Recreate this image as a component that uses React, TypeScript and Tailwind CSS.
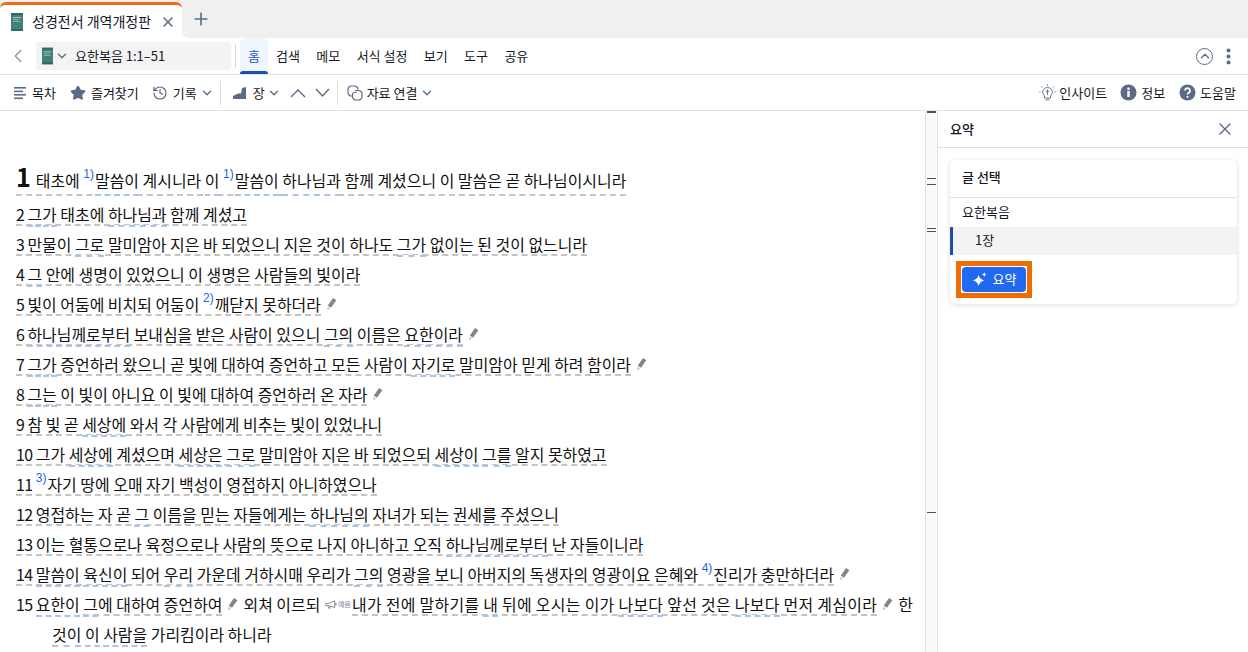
import React from "react";
import { ChevronLeft, ChevronDown, ChevronUp, X, Plus, History, Star } from "lucide-react";

const FONT = { fontFamily: '"Noto Sans CJK KR","Noto Sans",sans-serif' };
const SLATE = "#5b6b85";

function BookIcon({ w = 12, h = 18 }: { w?: number; h?: number }) {
  return (
    <svg width={w} height={h} viewBox="0 0 12 18" className="shrink-0">
      <rect width="12" height="18" fill="#43807a" />
      <rect width="12" height="2" fill="#35665f" />
      <rect y="16" width="12" height="2" fill="#35665f" />
      <rect x="2" y="4" width="8" height="1" fill="#a8c6c1" />
      <rect x="2" y="6" width="6" height="1" fill="#8fb6b0" />
      <rect x="2" y="8" width="7" height="1" fill="#8fb6b0" />
    </svg>
  );
}

function Pen() {
  return (
    <svg width="11" height="15" viewBox="0 0 10 14" className="shrink-0 ml-[5px] mr-[5px] mt-[7px]">
      <path d="M6.5 1 L9.5 3 L4.5 10 L1.5 8 Z" fill="#858585" />
      <path d="M1.5 9 L3.5 10.5 L1 12.5 Z" fill="#bdbdbd" />
    </svg>
  );
}

const S = ({ children }: { children: React.ReactNode }) => (
  <sup className="text-[12px] text-[#2563eb] align-[3px] leading-none mr-[1px]" style={{ fontFamily: '"Liberation Sans",sans-serif' }}>{children}</sup>
);

const U = ({ children, first }: { children: React.ReactNode; first?: boolean }) => (
  <span className={"relative after:absolute after:left-0 after:right-0 after:h-[2px] after:bg-white after:border-b-2 after:border-dashed after:border-[#a9c4e6] " + (first ? "after:bottom-[-4px]" : "after:bottom-[-1px]")}>{children}</span>
);

const D = ({ children, cls }: { children: React.ReactNode; cls?: string }) => (
  <span className={"block h-[26px] leading-[28px] border-b-2 border-dashed border-[#c4c4c4] " + (cls || "")}>{children}</span>
);
const P = ({ children }: { children: React.ReactNode }) => (
  <span className="block h-[26px] leading-[28px]">{children}</span>
);

const Num = ({ children }: { children: React.ReactNode }) => (
  <span className="tracking-[-0.5px]">{children}</span>
);

const Verse = ({ children, pen }: { children: React.ReactNode; pen?: boolean }) => (
  <div className="flex h-[30px] pt-[1px] whitespace-pre">
    <D>{children}</D>
    {pen && <Pen />}
  </div>
);

const Sep = ({ cls }: { cls: string }) => <div className={"w-px h-[24px] bg-[#dcdcdc] shrink-0 " + cls} />;
const Lbl = ({ children, cls }: { children: React.ReactNode; cls?: string }) => (
  <span className={"text-[13px] text-[#111827] whitespace-nowrap " + (cls || "")}>{children}</span>
);
const Chev = ({ cls }: { cls: string }) => <ChevronDown size={14} strokeWidth={2.2} className={"text-[#5b6b85] shrink-0 " + cls} />;

export default function App() {
  return (
    <div style={FONT} className="w-[1248px] h-[652px] overflow-hidden flex flex-col bg-white text-[#111]">
      {/* tab bar */}
      <div className="h-[38px] flex shrink-0 bg-white">
        <div className="bg-[#f0f0f0] pt-[2px] shrink-0">
          <div className="w-[182px] h-[36px] bg-white rounded-t-[6px] border-t-[3px] border-[#ee6c1c] flex items-center pl-[11px]">
            <BookIcon />
            <span className="text-[14px] ml-[9px] text-[#111827] whitespace-nowrap">성경전서 개역개정판</span>
            <X size={16} strokeWidth={2.4} className="text-[#5b6b85] ml-[9px]" />
          </div>
        </div>
        <div className="flex-1 bg-[#f0f0f0] rounded-bl-[7px] flex items-center pl-[9px]">
          <Plus size={20} strokeWidth={1.9} className="text-[#5b6b85]" />
        </div>
      </div>

      {/* nav bar */}
      <div className="h-[37px] shrink-0 flex items-center border-b border-[#e2e2e2] pl-[7px] pr-[10px]">
        <ChevronLeft size={22} strokeWidth={1.5} className="text-[#8b95a5] shrink-0" />
        <div className="ml-[7px] w-[195px] h-[28px] bg-[#f3f3f3] rounded-[4px] flex items-center pl-[6px] shrink-0">
          <BookIcon w={11} h={18} />
          <ChevronDown size={14} strokeWidth={2.2} className="text-[#5b6b85] ml-[2px]" />
          <span className="text-[13px] ml-[6px] text-[#111827] whitespace-nowrap">요한복음 1:1–51</span>
        </div>
        <div className="w-px h-[24px] bg-[#d9d9d9] ml-[4px] shrink-0" />
        <div className="ml-[4px] flex items-stretch h-[36px] text-[13px] text-[#111827]">
          <div className="w-[28px] bg-[#f0f6fd] rounded-t-[5px] relative flex items-center justify-center text-[#1d4ed8]">
            홈
            <div className="absolute bottom-0 left-0 right-0 h-[3px] bg-[#1a4fb0] rounded-t-[3px]" />
          </div>
          <div className="flex items-center ml-[8px] gap-[16.4px] whitespace-nowrap">
            <span>검색</span><span>메모</span><span>서식 설정</span><span>보기</span><span>도구</span><span>공유</span>
          </div>
        </div>
        <div className="ml-auto flex items-center gap-[6px]">
          <div className="w-[17px] h-[17px] rounded-full border-[1.5px] border-[#5b6b85] flex items-center justify-center">
            <ChevronUp size={14} strokeWidth={2.2} className="text-[#5b6b85]" />
          </div>
          <svg width="19" height="19" viewBox="0 0 19 19"><circle cx="9.5" cy="3.5" r="2" fill={SLATE} /><circle cx="9.5" cy="9.5" r="2" fill={SLATE} /><circle cx="9.5" cy="15.5" r="2" fill={SLATE} /></svg>
        </div>
      </div>

      {/* tool bar */}
      <div className="h-[36px] shrink-0 flex items-center border-b border-[#e2e2e2] pl-[14px] pr-[12px]">
        <svg width="12" height="14" viewBox="0 0 12 14" className="shrink-0"><g fill={SLATE}><rect y="1" width="12" height="1.6" /><rect y="4.6" width="9" height="1.6" /><rect y="8" width="12" height="1.6" /><rect y="11.5" width="9" height="1.6" /></g></svg>
        <Lbl cls="ml-[6px]">목차</Lbl>
        <Star size={16} fill={SLATE} className="text-[#5b6b85] ml-[14px] shrink-0" />
        <Lbl cls="ml-[5px]">즐겨찾기</Lbl>
        <History size={16} strokeWidth={1.8} className="text-[#5b6b85] ml-[13px] shrink-0" />
        <Lbl cls="ml-[5px]">기록</Lbl>
        <Chev cls="ml-[3px]" />
        <Sep cls="ml-[6px]" />
        <svg width="14" height="12" viewBox="0 0 14 12" className="ml-[12px] shrink-0"><path d="M0 12 V9 L5 6.5 L8 6.5 L9 1 L13 0 V12 Z" fill={SLATE} /></svg>
        <Lbl cls="ml-[6px]">장</Lbl>
        <Chev cls="ml-[2px]" />
        <svg width="16" height="10" viewBox="0 0 16 10" className="ml-[9px] shrink-0"><polyline points="1,9 8,2 15,9" fill="none" stroke={SLATE} strokeWidth="1.4" /></svg>
        <svg width="15" height="10" viewBox="0 0 15 10" className="ml-[9px] shrink-0"><polyline points="1,1 7.5,8 14,1" fill="none" stroke={SLATE} strokeWidth="1.4" /></svg>
        <Sep cls="ml-[7px]" />
        <svg width="16" height="16" viewBox="0 0 16 16" className="ml-[9px] shrink-0" fill="none" stroke={SLATE} strokeWidth="1.2"><path d="M5.5 11 H4.5 A3.5 3.5 0 0 1 1 7.5 V4.5 A3.5 3.5 0 0 1 4.5 1 H7.5 A3.5 3.5 0 0 1 11 4.5" /><path d="M8 5.5 H11.5 A3.5 3.5 0 0 1 15 9 V11.5 A3.5 3.5 0 0 1 11.5 15 H9 A3.5 3.5 0 0 1 5.5 11.5 V9.5 A2 2 0 0 1 7.5 7.5 H9.5" /></svg>
        <Lbl cls="ml-[4px]">자료 연결</Lbl>
        <Chev cls="ml-[3px]" />
        <div className="ml-auto flex items-center">
          <svg width="17" height="18" viewBox="0 0 17 18" className="shrink-0" fill="none" stroke={SLATE} strokeWidth="0.9"><path d="M5.5 12 C4 10.5 3.7 9.5 3.7 8.3 A4.8 4.8 0 0 1 13.3 8.3 C13.3 9.5 13 10.5 11.5 12 V14 H5.5 Z" /><path d="M6.5 15.8 H10.5 M8.5 5.5 V11 M6.8 7.3 H10.2 M8.5 0.3 V1.8 M2.5 2.5 L3.5 3.5 M14.5 2.5 L13.5 3.5 M0.3 8 H1.5 M15.5 8 H16.7" /></svg>
          <Lbl cls="ml-[3px]">인사이트</Lbl>
          <svg width="17" height="17" viewBox="0 0 17 17" className="ml-[13px] shrink-0"><circle cx="8.5" cy="8.5" r="8" fill={SLATE} /><rect x="7.3" y="7" width="2.4" height="6" fill="#fff" /><circle cx="8.5" cy="4.8" r="1.3" fill="#fff" /></svg>
          <Lbl cls="ml-[4px]">정보</Lbl>
          <svg width="17" height="17" viewBox="0 0 17 17" className="ml-[14px] shrink-0"><circle cx="8.5" cy="8.5" r="8" fill={SLATE} /><path d="M6 6.6 A2.5 2.4 0 1 1 9.7 8.7 C8.9 9.2 8.5 9.6 8.5 10.5" fill="none" stroke="#fff" strokeWidth="1.7" /><circle cx="8.5" cy="12.8" r="1.1" fill="#fff" /></svg>
          <Lbl cls="ml-[4px]">도움말</Lbl>
        </div>
      </div>

      {/* body */}
      <div className="flex-1 flex min-h-0">
        <div className="flex-1 min-w-0 pl-[16px] pt-[46px] overflow-hidden text-[15.95px] text-[#111]">
          <div className="flex h-[42px] pt-[1px] whitespace-pre">
            <span className="block h-[38px] leading-[36px] border-b-2 border-dashed border-[#c4c4c4]"><span className="text-[25px] font-bold mr-[5px]">1</span>태초에 <S>1)</S><U first>말씀이</U> 계시니라 <U first>이</U> <S>1)</S><U first>말씀이</U> <U first>하나님과</U> 함께 계셨으니 이 말씀은 곧 하나님이시니라</span>
          </div>
          <Verse><Num>2 </Num><U>그가</U> 태초에 <U>하나님과</U> 함께 계셨고</Verse>
          <Verse><Num>3 </Num>만물이 <U>그로</U> 말미암아 지은 바 되었으니 지은 것이 하나도 <U>그가</U> 없이는 된 것이 없느니라</Verse>
          <Verse><Num>4 </Num><U>그</U> 안에 생명이 있었으니 이 생명은 사람들의 빛이라</Verse>
          <Verse pen><Num>5 </Num>빛이 어둠에 비치되 어둠이 <S>2)</S>깨닫지 못하더라</Verse>
          <Verse pen><Num>6 </Num><U>하나님께로부터</U> 보내심을 받은 사람이 있으니 <U>그의</U> 이름은 <U>요한이라</U></Verse>
          <Verse pen><Num>7 </Num><U>그가</U> 증언하러 왔으니 곧 빛에 대하여 증언하고 모든 사람이 <U>자기로</U> 말미암아 믿게 하려 함이라</Verse>
          <Verse pen><Num>8 </Num><U>그는</U> 이 빛이 아니요 이 빛에 대하여 증언하러 온 자라</Verse>
          <Verse><Num>9 </Num>참 빛 곧 <U>세상에</U> 와서 각 사람에게 비추는 빛이 있었나니</Verse>
          <Verse><Num>10 </Num>그가 <U>세상에</U> 계셨으며 <U>세상은</U> <U>그로</U> 말미암아 지은 바 되었으되 <U>세상이</U> <U>그를</U> 알지 못하였고</Verse>
          <Verse><Num>11 </Num><S>3)</S>자기 땅에 오매 자기 백성이 영접하지 아니하였으나</Verse>
          <Verse><Num>12 </Num>영접하는 자 곧 <U>그</U> 이름을 믿는 자들에게는 <U>하나님의</U> 자녀가 되는 권세를 주셨으니</Verse>
          <Verse><Num>13 </Num>이는 혈통으로나 육정으로나 사람의 뜻으로 나지 아니하고 오직 <U>하나님께로부터</U> 난 자들이니라</Verse>
          <Verse pen><Num>14 </Num><U>말씀이</U> <U>육신이</U> 되어 <U>우리</U> 가운데 거하시매 우리가 <U>그의</U> 영광을 보니 아버지의 독생자의 영광이요 은혜와 <S>4)</S>진리가 충만하더라</Verse>
          <div className="flex h-[30px] pt-[1px] whitespace-pre">
            <P><Num>15 </Num><U>요한이</U> </P>
            <D><U>그</U>에 대하여 증언하여</D>
            <Pen />
            <P>외쳐 이르되 </P>
            <svg width="12" height="11" viewBox="0 0 16 12" className="shrink-0 mt-[9px] ml-[1px]" fill="none" stroke="#7b8796" strokeWidth="1.2"><path d="M1 4.5 H5 L13 1 V10 L5 7.5 H1 Z" /><path d="M4 8 L5 11 H7 L6.5 8.5" /><circle cx="14" cy="5.5" r="1.2" /></svg>
            <span className="text-[7px] text-[#7b8796] leading-[28px] w-[14px] shrink-0 ml-[1px]">예음</span>
            <D cls="tracking-[0.3px]">내가 전에 말하기를 <U>내</U> 뒤에 오시는 이가 <U>나보다</U> 앞선 것은 <U>나보다</U> 먼저 계심이라</D>
            <Pen />
            <P>한</P>
          </div>
          <div className="flex h-[30px] pt-[1px] pl-[36px] whitespace-pre">
            <P><U>것이</U> <U>이</U> <U>사람을</U> 가리킴이라 하니라</P>
          </div>
        </div>

        {/* scroll rail */}
        <div className="w-[13px] bg-[#fafafa] border-x border-[#e2e2e2] relative shrink-0">
          <div className="absolute left-[1px] top-0 w-[9px] h-[2px] bg-[#55503e]" />
          <div className="absolute left-[1px] top-[67px] w-[9px] h-[1px] bg-[#55503e]" />
          <div className="absolute left-[1px] top-[73px] w-[9px] h-[1px] bg-[#55503e]" />
          <div className="absolute left-[1px] top-[117px] w-[9px] h-[1px] bg-[#55503e]" />
          <div className="absolute left-[1px] top-[120px] w-[9px] h-[1px] bg-[#55503e]" />
          <div className="absolute left-[1px] top-[401px] w-[9px] h-[1px] bg-[#55503e]" />
        </div>

        {/* panel */}
        <div className="w-[310px] shrink-0">
          <div className="h-[37px] border-b border-[#e2e2e2] flex items-center justify-between pl-[12px] pr-[13px]">
            <span className="text-[13px] font-medium text-[#111827]">요약</span>
            <X size={20} strokeWidth={1.6} className="text-[#5b6b85]" />
          </div>
          <div className="ml-[12px] mt-[12px] w-[287px] h-[144px] rounded-[6px] bg-white shadow-[0_1px_5px_rgba(0,0,0,0.14)] overflow-hidden">
            <div className="h-[38px] border-b border-[#e2e2e2] flex items-center pl-[12px] pb-[3px] text-[13px] font-medium text-[#111827]">글 선택</div>
            <div className="h-[29px] flex items-center pl-[12px] pb-[2px] text-[13px] text-[#111827]">요한복음</div>
            <div className="h-[28px] bg-[#f3f3f3] border-l-[3px] border-[#1a4fb0] flex items-center pl-[22px] pb-[2px] text-[13px] text-[#111827]">1장</div>
            <div className="ml-[6px] mt-[6px] w-[76px] h-[37px] border-[5px] border-[#ef6c00] p-[1px]">
              <div className="w-full h-full bg-[#2168f3] rounded-[4px] flex items-center justify-center gap-[5px] text-white text-[13px] pb-[1px]">
                <svg width="16" height="15" viewBox="0 0 17 16" className="shrink-0"><path d="M7 3 C7.8 6.5 9.5 8 13 9 C9.5 10 7.8 11.5 7 15 C6.2 11.5 4.5 10 1 9 C4.5 8 6.2 6.5 7 3 Z" fill="#fff" /><path d="M13 0 C13.3 1.6 14 2.3 15.6 2.6 C14 2.9 13.3 3.6 13 5.2 C12.7 3.6 12 2.9 10.4 2.6 C12 2.3 12.7 1.6 13 0 Z" fill="#fff" /></svg>
                요약
              </div>
            </div>
          </div>
        </div>
      </div>
    </div>
  );
}
